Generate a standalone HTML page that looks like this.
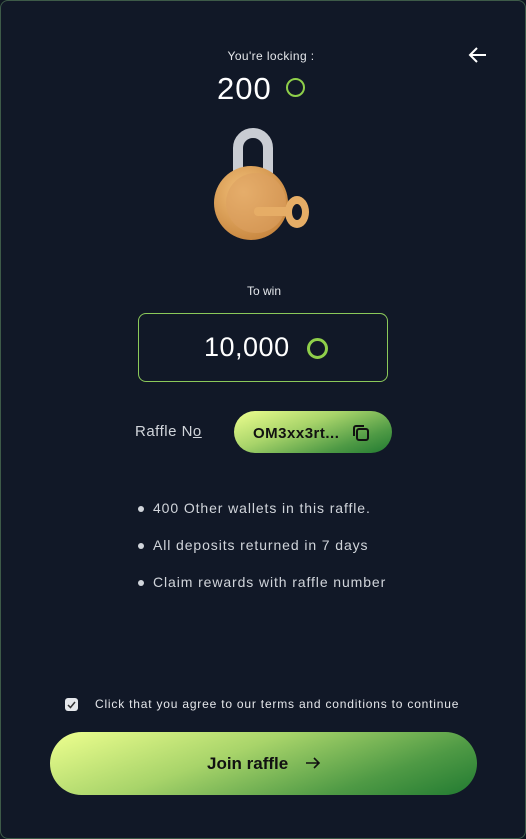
<!DOCTYPE html>
<html><head><style>
body{margin:0;background:#0f1622;}
.page{position:relative;width:524px;height:837px;background:#111827;border:1px solid #3d5a48;border-radius:8px;font-family:"Liberation Sans",sans-serif;color:#e5e7eb;overflow:hidden}
.abs{position:absolute}
.g{background:linear-gradient(160deg,#eeff8f 0%,#a8d46a 40%,#4f9a45 75%,#217a31 100%)}
.li{position:relative;padding-left:15px}
.li:before{content:"";position:absolute;left:0;top:16px;width:6px;height:6px;border-radius:50%;background:#d1d5db}
</style></head><body><div class="page">
<div class="abs" style="left:0;width:540px;top:48px;text-align:center;font-size:12px;color:#e5e7eb;letter-spacing:.4px">You're locking :</div>
<svg class="abs" style="left:466px;top:44px" width="22" height="20" viewBox="0 0 22 20"><path d="M19 10H3M10 3L3 10L10 17" stroke="#fff" stroke-width="2" fill="none"/></svg>
<div class="abs" style="left:216px;top:70px;font-size:31px;color:#fff;letter-spacing:1px">200</div>
<div class="abs" style="left:285px;top:77px;width:19px;height:19px;border-radius:50%;border:2.5px solid #8fcf4a;box-sizing:border-box"></div>
<svg class="abs" style="left:205px;top:125px" width="110" height="120" viewBox="0 0 110 120">
<defs><radialGradient id="b" cx="40%" cy="35%" r="70%"><stop offset="0" stop-color="#f3c17a"/><stop offset="1" stop-color="#c7853e"/></radialGradient></defs>
<path d="M32 45V22a15 15 0 0 1 30 0v25" stroke="#c9ccd3" stroke-width="10" fill="none"/>
<circle cx="45" cy="77" r="37" fill="url(#b)"/>
<circle cx="50" cy="77" r="30" fill="#dca060" opacity=".6"/>
<rect x="48" y="81" width="42" height="9" rx="4" fill="#e6ad66"/>
<ellipse cx="91" cy="86" rx="12" ry="16" fill="#e6ad66"/>
<ellipse cx="91" cy="86" rx="5" ry="8" fill="#111827"/>
</svg>
<div class="abs" style="left:0;width:526px;top:283px;text-align:center;font-size:12px">To win</div>
<div class="abs" style="left:137px;top:312px;width:250px;height:69px;border:1px solid #8bc95a;border-radius:8px;box-sizing:border-box"></div>
<div class="abs" style="left:203px;top:331px;font-size:27px;color:#fff;letter-spacing:.5px">10,000</div>
<div class="abs" style="left:306px;top:337px;width:21px;height:21px;border-radius:50%;border:3px solid #8fcf4a;box-sizing:border-box"></div>
<div class="abs" style="left:134px;top:422px;font-size:15px;color:#d1d5db;letter-spacing:.5px">Raffle N<u>o</u></div>
<div class="abs g" style="left:233px;top:410px;width:158px;height:42px;border-radius:21px"></div>
<div class="abs" style="left:252px;top:424px;font-size:15px;font-weight:bold;color:#111;letter-spacing:.5px">OM3xx3rt...</div>
<svg class="abs" style="left:350px;top:422px" width="20" height="20" viewBox="0 0 20 20"><rect x="6" y="6" width="11" height="11" rx="2" stroke="#111" stroke-width="2" fill="none"/><path d="M3 13V5a2 2 0 0 1 2-2h8" stroke="#111" stroke-width="2" fill="none"/></svg>
<div class="abs" style="left:137px;top:489px;font-size:14px;color:#d1d5db;line-height:37px;letter-spacing:.9px">
<div class="li">400 Other wallets in this raffle.</div><div class="li">All deposits returned in 7 days</div><div class="li">Claim rewards with raffle number</div></div>
<div class="abs" style="left:64px;top:697px;width:13px;height:13px;border-radius:3px;background:#e5e7eb"></div>
<svg class="abs" style="left:64px;top:697px" width="13" height="13"><path d="M3 7l2.5 2.5L10 4" stroke="#333" stroke-width="1.5" fill="none"/></svg>
<div class="abs" style="left:94px;top:696px;font-size:12px;color:#e5e7eb;letter-spacing:.8px">Click that you agree to our terms and conditions to continue</div>
<div class="abs g" style="left:49px;top:731px;width:427px;height:63px;border-radius:32px"></div>
<div class="abs" style="left:206px;top:753px;font-size:17px;font-weight:bold;color:#111">Join raffle</div>
<svg class="abs" style="left:304px;top:755px" width="16" height="14"><path d="M1 7h13M9 2l5 5-5 5" stroke="#111" stroke-width="1.6" fill="none"/></svg>
</div></body></html>
